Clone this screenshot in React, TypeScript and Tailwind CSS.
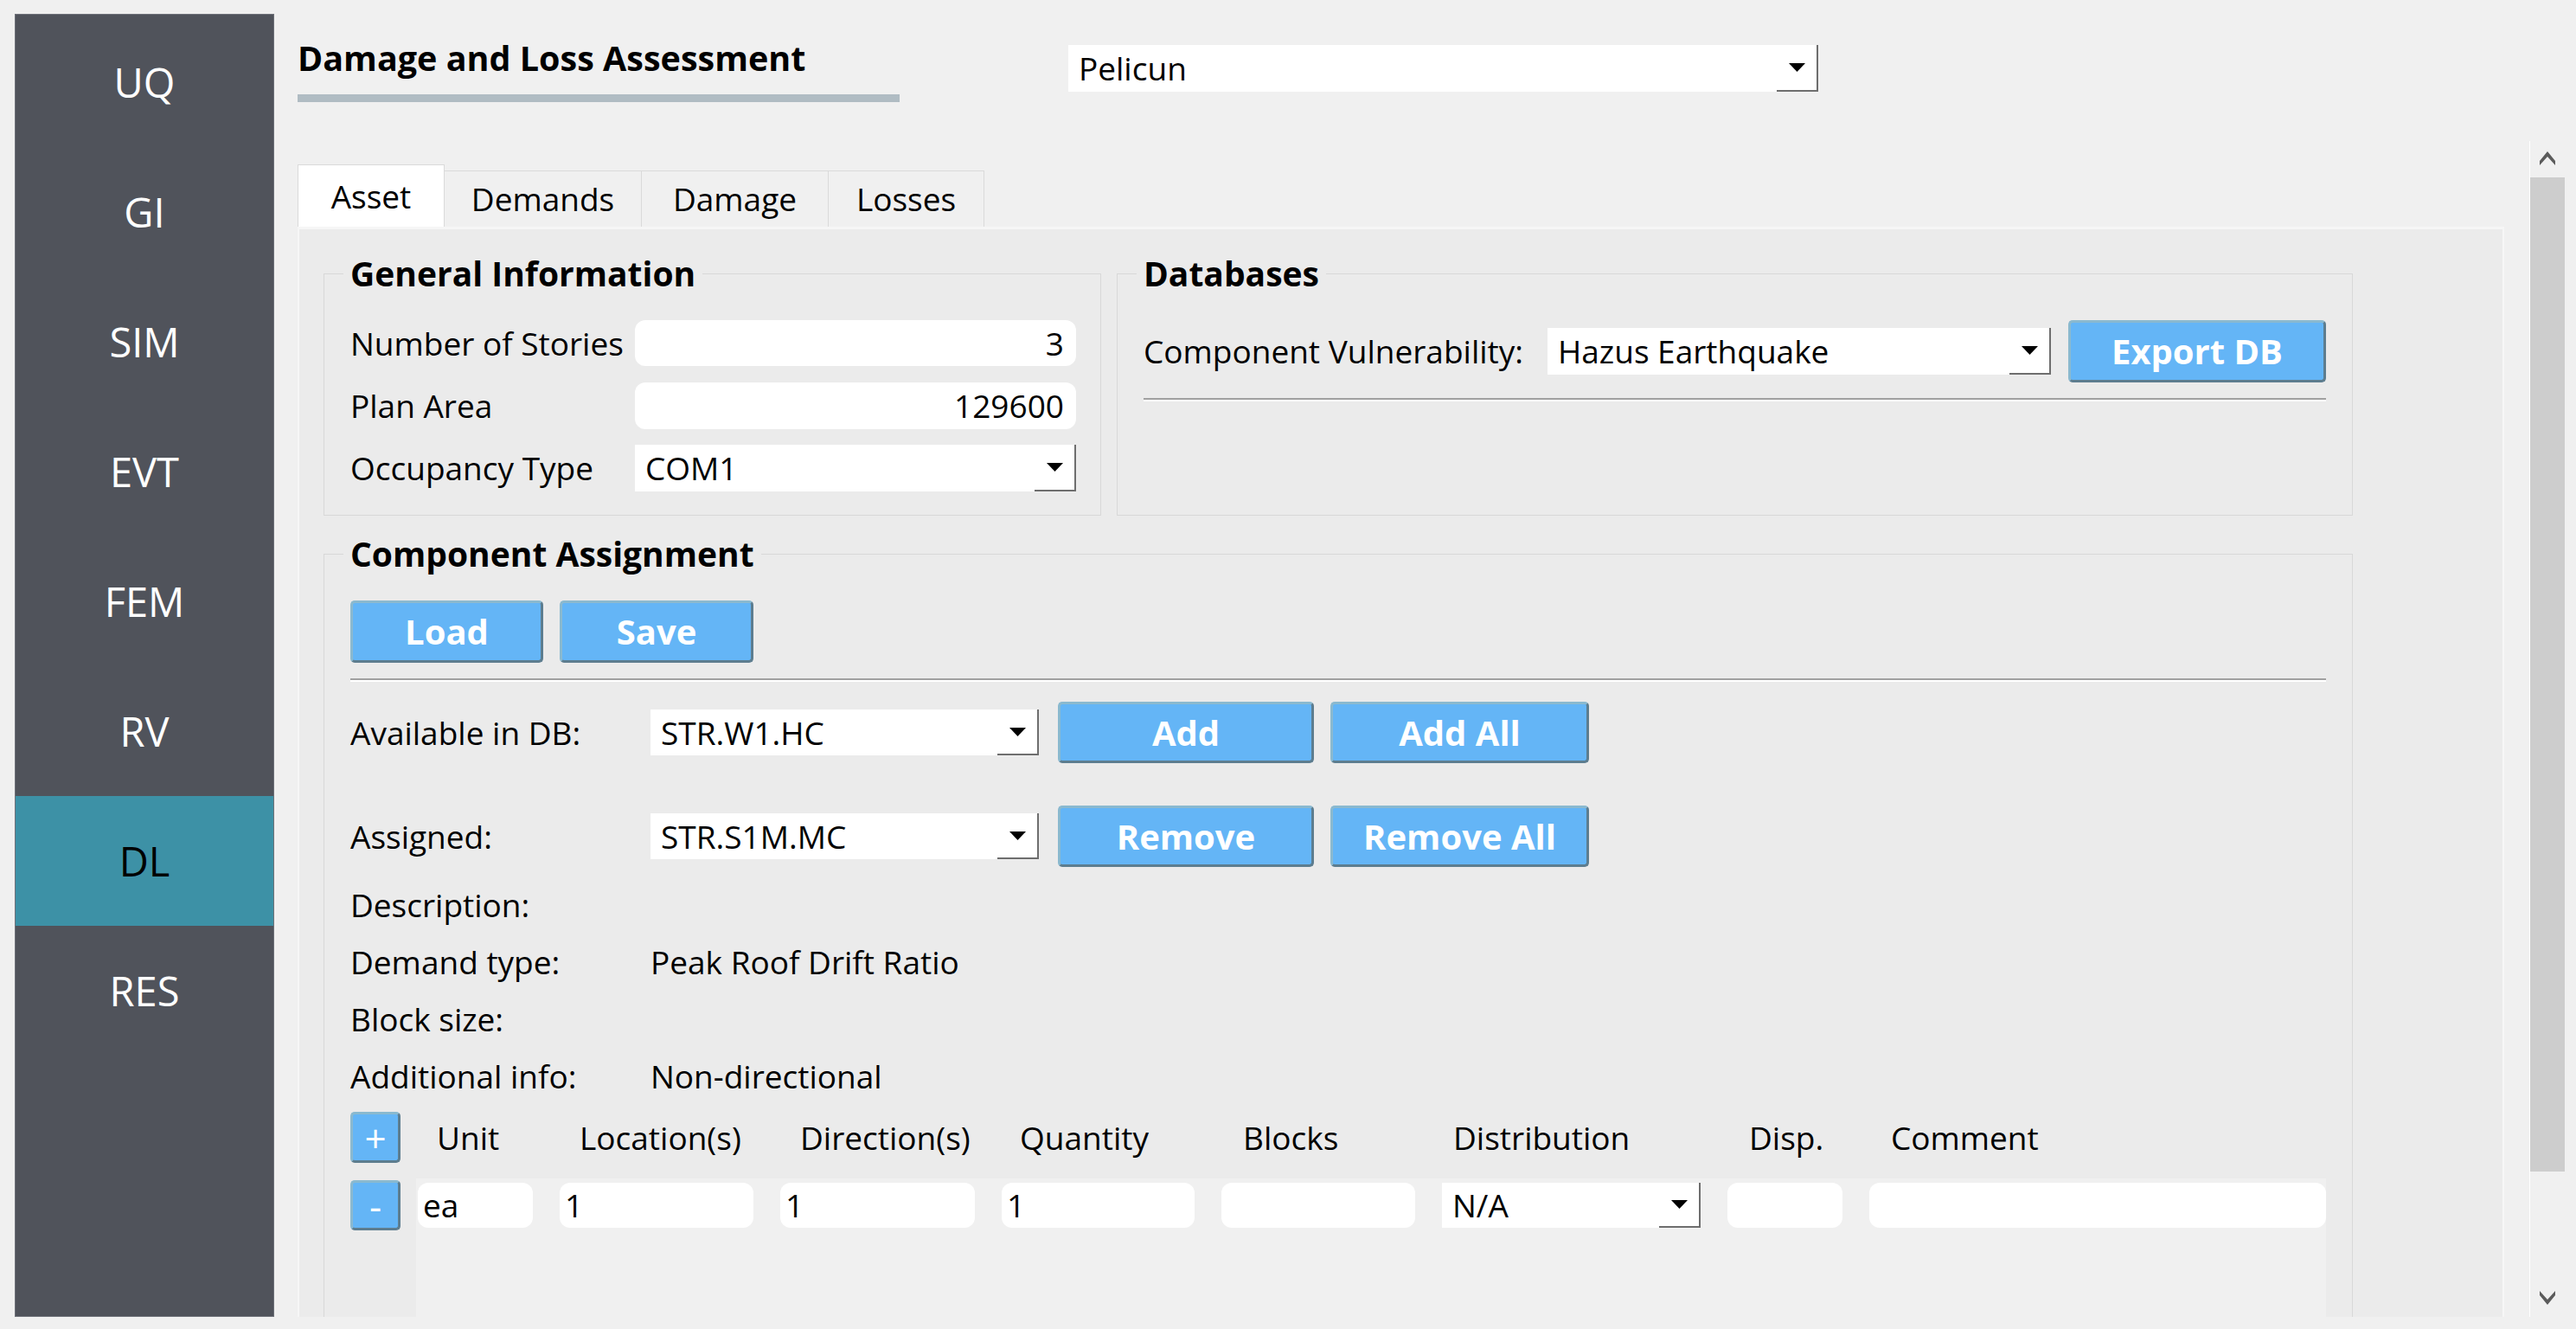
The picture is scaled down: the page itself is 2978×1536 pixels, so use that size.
import React from "react";

const SIDE = ["UQ", "GI", "SIM", "EVT", "FEM", "RV", "DL", "RES"];

function Arrow() {
  return (
    <svg width="19" height="10" viewBox="0 0 19 10">
      <polygon points="0,0 19,0 9.5,10" fill="#000" />
    </svg>
  );
}

function Combo({ value, className }: { value: string; className: string }) {
  return (
    <div className={`flex items-stretch bg-white shrink-0 ${className}`}>
      <div className="flex-1 flex items-center pl-[12px] whitespace-nowrap overflow-hidden">{value}</div>
      <div className="w-[48px] flex items-center justify-center border-r-2 border-b-2 border-[#6e6e6e]">
        <Arrow />
      </div>
    </div>
  );
}

function Btn({ label, className }: { label: string; className: string }) {
  return (
    <div
      className={`shrink-0 flex items-center justify-center rounded-[5px] bg-[#64b5f6] border-[3px] border-t-[#8ab9cf] border-l-[#8ab9cf] border-r-[#5d7d8f] border-b-[#5d7d8f] text-white font-bold text-[40px] whitespace-nowrap ${className}`}
    >
      {label}
    </div>
  );
}

function Field({ value, className, right }: { value: string; className: string; right?: boolean }) {
  return (
    <div
      className={`shrink-0 h-[52px] rounded-[12px] bg-white flex items-center ${right ? "justify-end pr-[14px]" : "pl-[6px]"} ${className}`}
    >
      {value}
    </div>
  );
}

export default function App() {
  return (
    <div className="w-[2978px] h-[1536px] bg-[#f0f0f0] flex overflow-hidden font-['Open_Sans',sans-serif] text-black text-[37px]">
      {/* Sidebar */}
      <aside className="ml-[17px] mt-[16px] w-[300px] h-[1506px] bg-[#50535b] border border-[#6e7179] pt-[3px] flex flex-col shrink-0">
        {SIDE.map((s) => (
          <div
            key={s}
            className={`h-[150px] flex items-center justify-center text-[47px] ${s === "DL" ? "bg-[#3d91a6] text-black" : "text-white"}`}
          >
            {s}
          </div>
        ))}
      </aside>

      {/* Main */}
      <div className="flex flex-col w-[2661px] shrink-0">
        <header className="h-[163px] flex items-start shrink-0">
          <div className="ml-[27px] mt-[43px] w-[696px]">
            <div className="h-[48px] leading-[48px] font-bold text-[39.5px] whitespace-nowrap">Damage and Loss Assessment</div>
            <div className="mt-[18px] h-[9px] bg-[#b0bcc3]" />
          </div>
          <Combo value="Pelicun" className="ml-[195px] mt-[52px] w-[867px] h-[54px]" />
        </header>

        <div className="flex h-[1359px] shrink-0">
          <div className="w-[2607px] pl-[27px] pt-[27px] overflow-hidden flex flex-col">
            {/* Tabs */}
            <div className="flex items-end h-[72px] shrink-0">
              <div className="w-[170px] h-[72px] bg-white border border-b-0 border-[#dadada] flex items-center justify-center">
                Asset
              </div>
              <div className="w-[228px] h-[65px] border-t border-r border-[#dadada] flex items-center justify-center">
                Demands
              </div>
              <div className="w-[216px] h-[65px] border-t border-r border-[#dadada] flex items-center justify-center">
                Damage
              </div>
              <div className="w-[180px] h-[65px] border-t border-r border-[#dadada] flex items-center justify-center">
                Losses
              </div>
            </div>

            {/* Pane */}
            <div className="w-[2551px] flex-1 bg-[#ebebeb] border-t-[3px] border-x-2 border-[#f6f6f6] pl-[28px] pt-[51px] overflow-hidden">
              <div className="flex items-start gap-[18px]">
                {/* General Information */}
                <div className="relative w-[899px] h-[280px] border border-[#d8d8d8] pt-[53px] pl-[30px] pr-[28px] flex flex-col gap-[19px]">
                  <div className="absolute left-[22px] -top-[25px] h-[48px] leading-[48px] px-[8px] bg-[#ebebeb] font-bold text-[39px] whitespace-nowrap">
                    General Information
                  </div>
                  <div className="flex items-center h-[53px]">
                    <div className="w-[329px] shrink-0 whitespace-nowrap">Number of Stories</div>
                    <Field value="3" right className="flex-1 h-[53px]" />
                  </div>
                  <div className="flex items-center h-[53px]">
                    <div className="w-[329px] shrink-0 whitespace-nowrap">Plan Area</div>
                    <Field value="129600" right className="flex-1 h-[54px]" />
                  </div>
                  <div className="flex items-center h-[54px]">
                    <div className="w-[329px] shrink-0 whitespace-nowrap">Occupancy Type</div>
                    <Combo value="COM1" className="flex-1 h-[54px]" />
                  </div>
                </div>

                {/* Databases */}
                <div className="relative w-[1429px] h-[280px] border border-[#d8d8d8] pt-[53px] pl-[30px] pr-[30px]">
                  <div className="absolute left-[22px] -top-[25px] h-[48px] leading-[48px] px-[8px] bg-[#ebebeb] font-bold text-[39px] whitespace-nowrap">
                    Databases
                  </div>
                  <div className="flex items-center h-[72px]">
                    <div className="w-[467px] shrink-0 whitespace-nowrap">Component Vulnerability:</div>
                    <Combo value="Hazus Earthquake" className="w-[582px] h-[54px]" />
                    <Btn label="Export DB" className="ml-[20px] w-[298px] h-[72px]" />
                  </div>
                  <div className="mt-[18px] w-[1367px] border-t-2 border-b-2 border-t-[#a0a0a0] border-b-white" />
                </div>
              </div>

              {/* Component Assignment */}
              <div className="relative mt-[44px] w-[2346px] h-[1000px] border border-[#d8d8d8] pt-[53px] pl-[30px]">
                <div className="absolute left-[22px] -top-[25px] h-[48px] leading-[48px] px-[8px] bg-[#ebebeb] font-bold text-[39px] whitespace-nowrap">
                  Component Assignment
                </div>
                <div className="flex gap-[19px] h-[72px]">
                  <Btn label="Load" className="w-[223px] h-[72px]" />
                  <Btn label="Save" className="w-[224px] h-[72px]" />
                </div>
                <div className="mt-[18px] w-[2284px] border-t-2 border-b-2 border-t-[#a0a0a0] border-b-white" />

                <div className="mt-[23px] flex items-center h-[71px]">
                  <div className="w-[347px] shrink-0 whitespace-nowrap">Available in DB:</div>
                  <Combo value="STR.W1.HC" className="w-[449px] h-[53px]" />
                  <Btn label="Add" className="ml-[22px] w-[296px] h-[71px]" />
                  <Btn label="Add All" className="ml-[19px] w-[299px] h-[71px]" />
                </div>
                <div className="mt-[49px] flex items-center h-[71px]">
                  <div className="w-[347px] shrink-0 whitespace-nowrap">Assigned:</div>
                  <Combo value="STR.S1M.MC" className="w-[449px] h-[53px]" />
                  <Btn label="Remove" className="ml-[22px] w-[296px] h-[71px]" />
                  <Btn label="Remove All" className="ml-[19px] w-[299px] h-[71px]" />
                </div>

                <div className="mt-[11px] flex flex-col">
                  <div className="flex items-center h-[66px]">
                    <div className="w-[347px] shrink-0 whitespace-nowrap">Description:</div>
                  </div>
                  <div className="flex items-center h-[66px]">
                    <div className="w-[347px] shrink-0 whitespace-nowrap">Demand type:</div>
                    <div className="whitespace-nowrap">Peak Roof Drift Ratio</div>
                  </div>
                  <div className="flex items-center h-[66px]">
                    <div className="w-[347px] shrink-0 whitespace-nowrap">Block size:</div>
                  </div>
                  <div className="flex items-center h-[66px]">
                    <div className="w-[347px] shrink-0 whitespace-nowrap">Additional info:</div>
                    <div className="whitespace-nowrap">Non-directional</div>
                  </div>
                </div>

                {/* table header */}
                <div className="mt-[8px] flex items-center h-[59px]">
                  <Btn label="+" className="w-[58px] h-[59px] !font-normal !text-[44px]" />
                  <div className="ml-[18px] pl-[2px] flex gap-[31px] whitespace-nowrap">
                    <div className="w-[133px] pl-[22px]">Unit</div>
                    <div className="w-[224px] pl-[23px]">Location(s)</div>
                    <div className="w-[225px] pl-[23px]">Direction(s)</div>
                    <div className="w-[223px] pl-[21px]">Quantity</div>
                    <div className="w-[224px] pl-[25px]">Blocks</div>
                    <div className="w-[299px] pl-[13px]">Distribution</div>
                    <div className="w-[133px] pl-[25px]">Disp.</div>
                    <div className="w-[528px] pl-[25px]">Comment</div>
                  </div>
                </div>

                {/* table row */}
                <div className="mt-[18px] flex items-start">
                  <Btn label="-" className="mt-[2px] w-[58px] h-[58px] !font-normal !text-[44px]" />
                  <div className="ml-[18px] w-[2208px] h-[200px] bg-[#f0f0f0] pt-[5px] pl-[2px] flex gap-[31px]">
                    <Field value="ea" className="w-[133px]" />
                    <Field value="1" className="w-[224px]" />
                    <Field value="1" className="w-[225px]" />
                    <Field value="1" className="w-[223px]" />
                    <Field value="" className="w-[224px]" />
                    <Combo value="N/A" className="w-[299px] h-[52px]" />
                    <Field value="" className="w-[133px]" />
                    <Field value="" className="w-[528px]" />
                  </div>
                </div>
              </div>
            </div>
          </div>

          {/* Scrollbar */}
          <div className="w-[54px] h-full border-l border-white flex flex-col shrink-0">
            <div className="w-[40px] h-[42px] pt-[12px] flex justify-center items-start">
              <svg width="18" height="16" viewBox="0 0 18 16">
                <polygon points="9,0 18,11 18,16 9,6 0,16 0,11" fill="#5b5b5b" />
              </svg>
            </div>
            <div className="w-[40px] h-[1149px] bg-[#cdcdcd]" />
            <div className="w-[40px] mt-[138px] flex justify-center">
              <svg width="18" height="16" viewBox="0 0 18 16">
                <polygon points="9,16 18,5 18,0 9,10 0,0 0,5" fill="#5b5b5b" />
              </svg>
            </div>
          </div>
        </div>
      </div>
    </div>
  );
}
